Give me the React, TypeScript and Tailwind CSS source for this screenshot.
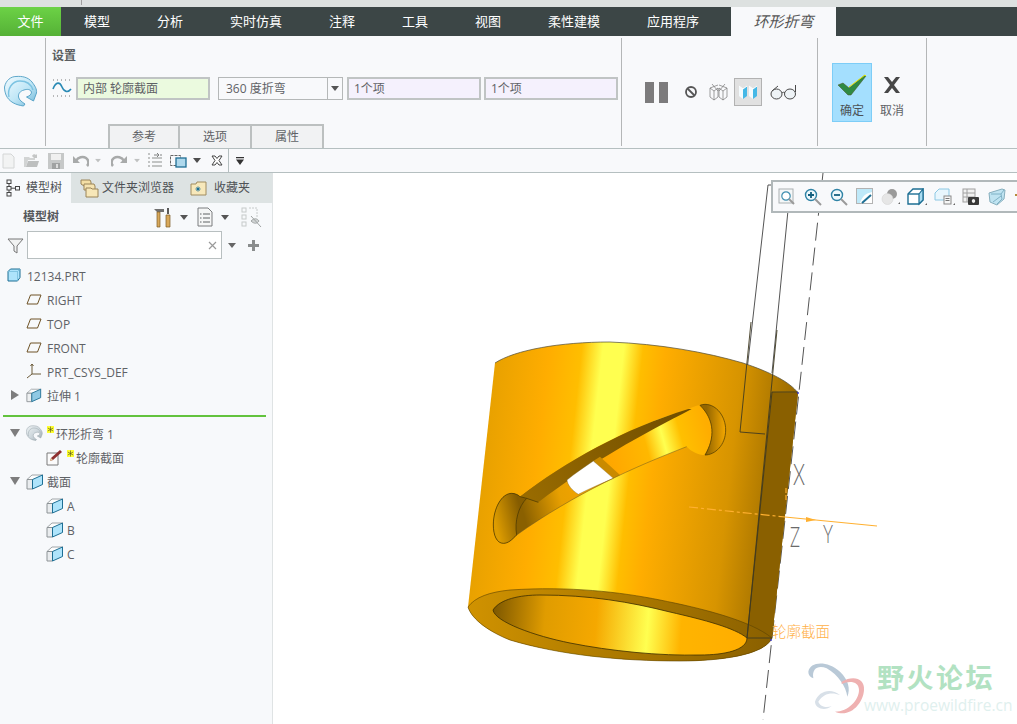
import React from "react";

const Tri = ({ c = "#6b6b6b", className = "" }: { c?: string; className?: string }) => (
  <svg width="8" height="5" viewBox="0 0 8 5" className={className}><path d="M0 0h8L4 5z" fill={c} /></svg>
);

const Revolve = ({ size = 34, grey = false }: { size?: number; grey?: boolean }) => (
  <svg width={size} height={size} viewBox="0 0 34 34">
    <defs>
      <linearGradient id={grey ? "rg" : "rb"} x1="0" y1="0" x2="1" y2="1">
        <stop offset="0" stopColor={grey ? "#eef2f4" : "#f2fbff"} />
        <stop offset="0.55" stopColor={grey ? "#ccd6db" : "#bfe6f6"} />
        <stop offset="1" stopColor={grey ? "#98a5ab" : "#6fb7d8"} />
      </linearGradient>
    </defs>
    <path d="M0.5 12C2 5 7 1.5 12 1.5C18 1 24 2 28 7C31 11 33 14 32.5 18L29.5 26L22.5 22C25 21 27.5 20 27.5 17C26 14 23 14 20 15C16 16 14 19 14.5 22C15 25 18 27 21 29L19.5 31C12 30 5 27 2 20C1 17 0.5 15 0.5 12Z" fill={`url(#${grey ? "rg" : "rb"})`} stroke={grey ? "#8d9aa1" : "#4f9ec4"} strokeWidth="0.9" />
    <path d="M5 22C3 14 8 6 16 6c6 0 11 3 13 9" fill="none" stroke={grey ? "#aab6bc" : "#7cc3e2"} strokeWidth="1.4" />
  </svg>
);

const Cube = ({ front = "#e9ecee", side = "#aee4fb", w = 18, h = 17 }: { front?: string; side?: string; w?: number; h?: number }) => (
  <svg width={w} height={h} viewBox="0 0 18 17">
    <path d="M1 6.5l5-4.5h11l-5 4.5z" fill="#fdfdfd" stroke="#9fa5a8" strokeWidth="1" />
    <path d="M1 6.5h5.5V16H1z" fill={front} stroke="#8d9396" strokeWidth="1" />
    <path d="M6.5 6.5L16.5 2v9.5L6.5 16z" fill={side} stroke="#1d6f94" strokeWidth="1" />
  </svg>
);

const Plane = () => (
  <svg width="16" height="11" viewBox="0 0 16 11"><path d="M4.5 1H15l-3.5 9H1z" fill="none" stroke="#6e5326" strokeWidth="1" /></svg>
);

const Star = () => (
  <svg width="7" height="8" viewBox="0 0 7 8" className="mb-[6px] shrink-0">
    <rect width="7" height="7" fill="#ffff30" />
    <path d="M3.5 0.5v6M0.8 2l5.4 3M0.8 5l5.4-3" stroke="#5c5c20" strokeWidth="0.7" />
  </svg>
);

const Text12 = ({ children }: { children: React.ReactNode }) => (
  <span className="text-[12px] leading-none text-[#5f6266] whitespace-nowrap">{children}</span>
);

function TreeRow({ indent, tri, icon, children }: { indent: string; tri?: "r" | "d"; icon: React.ReactNode; children: React.ReactNode }) {
  return (
    <div className={`flex h-6 items-center ${indent}`}>
      {tri === "r" && <svg width="8" height="10" viewBox="0 0 8 10" className="mr-[7px] ml-[11px]"><path d="M0 0l8 5-8 5z" fill="#7d7d7d" /></svg>}
      {tri === "d" && <svg width="10" height="8" viewBox="0 0 10 8" className="mr-[6px] ml-[10px]"><path d="M0 0h10L5 8z" fill="#7d7d7d" /></svg>}
      {icon}
      {children}
    </div>
  );
}

const Slot = ({ children, className = "" }: { children: React.ReactNode; className?: string }) => (
  <div className={`flex w-[26px] shrink-0 items-center justify-center ${className}`}>{children}</div>
);

function CanvasBar() {
  return (
    <div className="absolute left-[498px] top-[7px] flex h-[33px] w-[246px] items-center overflow-hidden border-2 border-r-0 border-[#b1b8ba] bg-[#f8f9fb] pl-[1px]">
      <Slot><svg width="18" height="18" viewBox="0 0 18 18"><rect x="1" y="1" width="14" height="14" fill="#f4f7f8" stroke="#aab0b2" /><circle cx="8" cy="8" r="4.2" fill="#fff" stroke="#3f8fb0" strokeWidth="1.2" /><path d="M11 11l5 5" stroke="#9a9a9a" strokeWidth="2" /></svg></Slot>
      <Slot><svg width="18" height="18" viewBox="0 0 18 18"><circle cx="7" cy="7" r="5.5" fill="#eef8fc" stroke="#2f83a6" strokeWidth="1.4" /><path d="M4 7h6M7 4v6" stroke="#14607f" strokeWidth="1.8" /><path d="M11 11l6 6" stroke="#9a9a9a" strokeWidth="2" /></svg></Slot>
      <Slot><svg width="18" height="18" viewBox="0 0 18 18"><circle cx="7" cy="7" r="5.5" fill="#eef8fc" stroke="#2f83a6" strokeWidth="1.4" /><path d="M4 7h6" stroke="#14607f" strokeWidth="1.8" /><path d="M11 11l6 6" stroke="#9a9a9a" strokeWidth="2" /></svg></Slot>
      <Slot><svg width="18" height="17" viewBox="0 0 18 17"><rect x="0.5" y="0.5" width="16" height="15" fill="#fff" stroke="#b3b3b3" /><path d="M1 1h15v3C12 5 7 6 4 15H1z" fill="#bfe9f9" /><path d="M6 15l9-8" stroke="#1d6f94" strokeWidth="2" /></svg></Slot>
      <Slot><svg width="20" height="18" viewBox="0 0 20 18"><circle cx="11" cy="6" r="5" fill="#9a9a9a" /><circle cx="6.5" cy="11" r="5.5" fill="#e6e6e6" stroke="#cfcfcf" strokeWidth="0.5" /><path d="M19 16h-2l2-2z" fill="#666" /></svg></Slot>
      <Slot><svg width="20" height="18" viewBox="0 0 20 18"><path d="M1 6l5-5h10v11l-4 4H1z" fill="#fff" stroke="#1d6f94" strokeWidth="1.4" /><path d="M12 6l4-5v11l-4 4z" fill="#a9dcf2" stroke="#1d6f94" strokeWidth="1.2" /><path d="M1 6h11" stroke="#1d6f94" strokeWidth="1.4" /><path d="M20 17h-2l2-2z" fill="#666" /></svg></Slot>
      <Slot className="ml-[2px]"><svg width="22" height="18" viewBox="0 0 22 18"><path d="M1 5l4-4h10v11H1z" fill="#e8f6fd" stroke="#8cc8e4" /><rect x="10" y="8" width="7" height="8" fill="#f6f6f6" stroke="#8a8a8a" /><path d="M11.5 10.5h4M11.5 12.5h4" stroke="#777" /><path d="M21 17h-2l2-2z" fill="#666" /></svg></Slot>
      <Slot><svg width="18" height="18" viewBox="0 0 18 18"><rect x="1" y="1" width="12" height="13" fill="#f1f1f1" stroke="#a0a0a0" /><path d="M1 5h12M1 9h12M5 1v13" stroke="#a0a0a0" /><rect x="6" y="9" width="11" height="8" rx="1" fill="#3a3a3a" /><circle cx="11.5" cy="13" r="2.4" fill="#eee" stroke="#222" /></svg></Slot>
      <Slot><svg width="18" height="18" viewBox="0 0 18 18"><path d="M1 5l13-4 3 1-1 9-7 6-7-3z" fill="#bfe3f1" stroke="#86aebd" /><path d="M3 6h10l1 5-5 5M13 6l3-4M5 14l8-6" stroke="#7fb2c6" fill="none" /></svg></Slot>
      <svg width="4" height="6" viewBox="0 0 4 6" className="ml-[5px] shrink-0"><path d="M0 0h2v2H0zM2 3h2v2H2z" fill="#b58a3a" /></svg>
    </div>
  );
}

function Model() {
  const bottom = "C472 620 490 632 510 640C560 655 620 661 680 661C720 661 765 655 772 638";
  return (
    <svg viewBox="273 173 744 551" className="block h-full w-full">
      <defs>
        <linearGradient id="body" gradientUnits="userSpaceOnUse" x1="480" y1="450" x2="800" y2="485">
          <stop offset="0" stopColor="#e6a000" />
          <stop offset="0.18" stopColor="#ffad00" />
          <stop offset="0.28" stopColor="#ffbe00" />
          <stop offset="0.345" stopColor="#ffff50" />
          <stop offset="0.41" stopColor="#ffff50" />
          <stop offset="0.47" stopColor="#ffbe00" />
          <stop offset="0.54" stopColor="#ffad00" />
          <stop offset="0.78" stopColor="#d79400" />
          <stop offset="1" stopColor="#8a6000" />
        </linearGradient>
        <linearGradient id="inner" gradientUnits="userSpaceOnUse" x1="493" y1="620" x2="750" y2="640">
          <stop offset="0" stopColor="#7e5800" />
          <stop offset="0.2" stopColor="#e09c00" />
          <stop offset="0.4" stopColor="#f5a800" />
          <stop offset="0.6" stopColor="#ffff50" />
          <stop offset="0.73" stopColor="#ffb400" />
          <stop offset="1" stopColor="#ffad00" />
        </linearGradient>
        <linearGradient id="ring" gradientUnits="userSpaceOnUse" x1="468" y1="610" x2="772" y2="640">
          <stop offset="0" stopColor="#d09200" />
          <stop offset="0.45" stopColor="#b07c00" />
          <stop offset="1" stopColor="#8a6000" />
        </linearGradient>
        <linearGradient id="slot" gradientUnits="userSpaceOnUse" x1="100" y1="300" x2="680" y2="140">
          <stop offset="0" stopColor="#8a6000" />
          <stop offset="0.2" stopColor="#e8a000" />
          <stop offset="0.5" stopColor="#ffa800" />
          <stop offset="0.68" stopColor="#ffb800" />
          <stop offset="0.77" stopColor="#ffff50" />
          <stop offset="0.86" stopColor="#ffc000" />
          <stop offset="1" stopColor="#ffad00" />
        </linearGradient>
        <linearGradient id="capL" gradientUnits="userSpaceOnUse" x1="30" y1="380" x2="110" y2="360">
          <stop offset="0" stopColor="#dd9c00" />
          <stop offset="1" stopColor="#855c00" />
        </linearGradient>
        <linearGradient id="capR" gradientUnits="userSpaceOnUse" x1="665" y1="100" x2="722" y2="100">
          <stop offset="0" stopColor="#946600" />
          <stop offset="1" stopColor="#f5a800" />
        </linearGradient>
        <linearGradient id="wall" gradientUnits="userSpaceOnUse" x1="105" y1="305" x2="610" y2="42">
          <stop offset="0" stopColor="#9a6c00" />
          <stop offset="1" stopColor="#6f4d00" />
        </linearGradient>
      </defs>

      <g fill="none" stroke="#555" strokeWidth="1">
        <path d="M823 173L763 720" strokeDasharray="18 7" />
        <path d="M775 185H768L740 432" />
        <path d="M790 190L772 373" />
      </g>

      <path d={`M495 363C515 350 560 342 610 342C660 344 705 352 743 363C770 372 790 382 798 393L772 638C765 655 720 661 680 661C620 661 560 655 510 640C490 632 472 620 468 607Z`} fill="url(#body)" />
      <path d="M772 392L798 393L772 638L747 638Z" fill="#8a6000" />
      <path d="M495 363C515 350 560 342 610 342C660 344 705 352 743 363C770 372 790 382 798 393" fill="none" stroke="#4d4a3a" strokeWidth="0.7" />
      <path d={`M468 607${bottom}C750 620 700 608 660 600C620 592 570 586 510 590C490 592 475 597 468 607Z`} fill="url(#ring)" stroke="#5a4200" strokeWidth="0.6" />
      <path d="M493 610C500 599 520 595 540 595C590 595 630 602 670 612C705 620 735 628 747 638C747 650 725 655 700 655C660 656 610 651 570 643C535 636 495 622 493 610Z" fill="url(#inner)" stroke="#3e2f00" strokeWidth="0.8" />

      <g transform="translate(485 395) scale(0.33333)" strokeWidth="2.2">
        <path d="M105 305C240 200 420 100 610 42C625 35 645 28 660 28C695 28 722 65 722 105C722 150 690 180 660 180C640 180 620 170 605 155C450 215 270 295 95 420C80 435 70 445 55 445C35 445 25 420 25 390C25 340 50 295 80 295C90 295 100 300 105 305Z" fill="url(#slot)" />
        <path d="M105 305C240 200 420 100 610 42L620 42C470 120 320 200 160 322Z" fill="url(#wall)" />
        <path d="M80 295C50 295 25 340 25 390C25 420 35 445 55 445C70 445 80 435 95 420C88 380 100 335 125 310L105 305C100 300 90 295 80 295Z" fill="url(#capL)" stroke="#4a3800" />
        <path d="M645 31C650 29 655 28 660 28C695 28 722 65 722 105C722 150 690 180 660 180C690 130 690 75 645 31Z" fill="url(#capR)" stroke="#4a3800" />
        <path d="M325 198L345 185L405 240L385 250Z" fill="#c98a00" />
        <path d="M325 198L385 250C350 265 315 280 280 298C260 285 248 270 246 255C270 235 300 215 325 198Z" fill="#fff" stroke="#7f6a30" strokeWidth="1.2" />
        <path d="M125 310L160 322" fill="none" stroke="#4a3800" />
        <path d="M605 155C450 215 270 295 95 420" fill="none" stroke="#6a5620" strokeWidth="1.5" />
      </g>

      <g fill="none" stroke="#3f3a20" strokeWidth="0.9">
        <path d="M751 322L740 432L765 434" />
        <path d="M772 392L747 638L772 638" />
        <path d="M772 392H798" />
        <path d="M777 330L747 638" />
      </g>
      <circle cx="798" cy="393" r="0.9" fill="#3333cc" />
      <circle cx="771" cy="640" r="0.9" fill="#3333cc" />

      <g fill="none" stroke="#ffb030" strokeWidth="1.2">
        <path d="M689 507L785 517" strokeDasharray="9 3 3 3" />
        <path d="M785 517L877 526" />
        <path d="M786 488V500" strokeDasharray="5 2" />
      </g>
      <path d="M806 517l10 3-10 2z" fill="#ffb030" />

      <text x="793" y="485" fontSize="30" fontWeight="300" fill="#6a6a6a" style={{ fontFamily: "Lato, sans-serif" }} textLength="12" lengthAdjust="spacingAndGlyphs">X</text>
      <text x="790" y="547" fontSize="27" fontWeight="300" fill="#6a6a6a" style={{ fontFamily: "Lato, sans-serif" }} textLength="10" lengthAdjust="spacingAndGlyphs">Z</text>
      <text x="823" y="543" fontSize="26" fontWeight="300" fill="#6a6a6a" style={{ fontFamily: "Lato, sans-serif" }} textLength="10" lengthAdjust="spacingAndGlyphs">Y</text>
      <text x="772" y="637" fontSize="14.5" fill="#ffb046" style={{ fontFamily: "'Noto Sans CJK SC', sans-serif", fontWeight: 300 }}>轮廓截面</text>

      <g transform="translate(760 600) scale(0.33333)">
        <path d="M145 215C150 185 200 180 240 215C265 240 272 265 262 290C258 260 235 225 200 205C175 195 155 205 160 235C150 230 145 225 145 215Z" fill="#b9c9d7" />
        <path d="M245 245C280 225 315 235 312 270C310 310 270 355 225 335C265 335 297 300 297 270C297 245 270 240 245 252Z" fill="#efb1b1" />
        <path d="M165 305C175 275 210 262 240 285C215 275 190 280 175 305C180 320 200 325 215 318C195 335 165 325 165 305Z" fill="#d8e0e8" />
      </g>
    </svg>
  );
}

export default function App() {
  const tabs = ["模型", "分析", "实时仿真", "注释", "工具", "视图", "柔性建模", "应用程序"];
  const font = "font-['Open_Sans','Noto_Sans_CJK_SC',sans-serif]";
  return (
    <div className={`relative flex h-[724px] w-[1017px] flex-col overflow-hidden bg-white ${font}`}>
      {/* title strip */}
      <div className="h-[7px] bg-[#dde1e0]"><div className="ml-[81px] h-[5px] w-px bg-[#a0a0a0]" /></div>

      {/* tabs */}
      <div className="flex h-[29px] items-center bg-[#3c4646] text-[13px] text-white">
        <div className="flex h-full w-[61px] items-center justify-center bg-gradient-to-b from-[#6cd246] to-[#55b136]">文件</div>
        <div className="ml-[23px] flex gap-[47px]">
          {tabs.map((t) => <span key={t}>{t}</span>)}
        </div>
        <div className="ml-[32px] flex h-full w-[105px] items-center justify-center bg-[#f8f9fb] text-[15px] italic text-[#555]">环形折弯</div>
      </div>

      {/* ribbon */}
      <div className="flex h-[112px] bg-[#f8f9fb]">
        <div className="flex w-[45px] items-center pl-[4px]"><Revolve /></div>
        <div className="my-[2px] w-px bg-[#b4b6b7]" />
        <div className="flex w-[575px] flex-col pl-[6px] pt-[12px]">
          <div className="h-4 text-[12px] font-bold leading-4 text-[#5a5d60]">设置</div>
          <div className="mt-[13px] flex h-[23px] items-center text-[12px] text-[#5f6266]">
            <svg width="20" height="19" viewBox="0 0 20 19" className="mr-[4px]">
              <path d="M1 1h18M1 17h18" stroke="#777" strokeWidth="1" strokeDasharray="1 3" />
              <path d="M1 10C4 2 8 3 10 8s6 6 9 2" fill="none" stroke="#2a8ab5" strokeWidth="1.6" />
            </svg>
            <div className="flex h-[23px] w-[134px] items-center border-2 border-[#c0c4c4] bg-[#ebfadf] pl-[5px]">内部 轮廓截面</div>
            <div className="ml-[8px] flex h-[23px] w-[125px] items-center border border-[#b5b8b8] bg-[#f8f9fb] pl-[7px]">
              <span className="flex-1">360 度折弯</span>
              <span className="flex h-full w-[15px] items-center justify-center border-l border-[#b5b8b8]"><Tri c="#555" /></span>
            </div>
            <div className="ml-[4px] flex h-[23px] w-[134px] items-center border-2 border-[#c0c4c4] bg-[#f5f1fd] pl-[5px]">1个项</div>
            <div className="ml-[3px] flex h-[23px] w-[134px] items-center border-2 border-[#c0c4c4] bg-[#f5f1fd] pl-[5px]">1个项</div>
          </div>
          <div className="ml-[56px] mt-[24px] flex h-[24px] text-[12px] text-[#5f6266]">
            <div className="flex w-[72px] items-center justify-center border-2 border-b-0 border-[#bcc0c0] bg-[#f1f2f3]">参考</div>
            <div className="flex w-[72px] items-center justify-center border-2 border-b-0 border-l-0 border-[#bcc0c0] bg-[#f1f2f3]">选项</div>
            <div className="flex w-[72px] items-center justify-center border-2 border-b-0 border-l-0 border-[#bcc0c0] bg-[#f1f2f3]">属性</div>
          </div>
        </div>
        <div className="my-[2px] w-px bg-[#b4b6b7]" />
        <div className="flex w-[195px] items-center pl-[23px]">
          <div className="h-[21px] w-[9px] bg-[#7c7b7c]" />
          <div className="ml-[5px] h-[21px] w-[9px] bg-[#7c7b7c]" />
          <svg width="14" height="14" viewBox="0 0 14 14" className="ml-[16px]"><circle cx="7" cy="7" r="5" fill="none" stroke="#555" strokeWidth="1.8" /><path d="M3.5 3.5l7 7" stroke="#555" strokeWidth="1.8" /></svg>
          <svg width="20" height="18" viewBox="0 0 20 18" className="ml-[11px]" fill="none" stroke="#777" strokeWidth="0.7"><path d="M1 5l4 3 4-3v9l-4 3-4-3zM10 5l4 3 4-3v9l-4 3-4-3zM5 8v9M14 8v9M3 1l6 7M16 1l-6 7M1 5l8-3M10 2l8 3" /></svg>
          <div className="ml-[5px] flex h-[28px] w-[28px] items-center justify-center border border-[#b2b2b2] bg-[#e1e1e1]">
            <svg width="20" height="16" viewBox="0 0 20 16"><path d="M1 2l4 3v10L1 12z" fill="#f4fbfe" /><path d="M5 5l4-3v10l-4 3z" fill="#45b8e6" /><path d="M11 2l4 3v10l-4-3z" fill="#f4fbfe" /><path d="M15 5l4-3v10l-4 3z" fill="#45b8e6" /><path d="M1 2l4 3 4-3M11 2l4 3 4-3" stroke="#fff" fill="none" /></svg>
          </div>
          <svg width="27" height="16" viewBox="0 0 27 16" className="ml-[8px]" fill="none" stroke="#4a4a4a" strokeWidth="1"><ellipse cx="6.5" cy="10" rx="5.5" ry="5" fill="#eef3f6" /><ellipse cx="20" cy="10" rx="5.5" ry="5" fill="#eef3f6" /><path d="M12 9c1-1 2-1 3 0M2 7L8 2M25.5 8V1" /></svg>
        </div>
        <div className="my-[2px] w-px bg-[#b4b6b7]" />
        <div className="flex w-[108px] items-center pl-[14px]">
          <div className="flex h-[59px] w-[40px] flex-col items-center border border-[#7dcdf7] bg-[#a4dffe] pt-[10px]">
            <svg width="30" height="22" viewBox="0 0 30 22"><path d="M1 11l5-2 6 5L28 1l1 1-15 19h-3z" fill="#2f8a43" stroke="#4c4c20" strokeWidth="0.5" /><path d="M12 13L28 1l1 1" fill="none" stroke="#e8e800" strokeWidth="1" /></svg>
            <span className="mt-[9px] text-[12px] leading-none text-[#4c5257]">确定</span>
          </div>
          <div className="ml-[8px] flex h-[59px] w-[24px] flex-col items-center pt-[13px]">
            <svg width="20" height="18" viewBox="0 0 20 18"><path d="M2 1h4l4 5 4-5h4l-6 8 6 8h-4l-4-5-4 5H2l6-8z" fill="#474747" /></svg>
            <span className="mt-[11px] text-[12px] leading-none text-[#5f6266] whitespace-nowrap">取消</span>
          </div>
        </div>
        <div className="my-[2px] w-px bg-[#b4b6b7]" />
      </div>

      {/* quick access */}
      <div className="flex h-[25px] items-center border-y border-[#b5bfc0] bg-[#f8f9fb] pl-[2px]">
        <svg width="13" height="16" viewBox="0 0 13 16"><path d="M1 1h8l3 3v11H1z" fill="#f2f3f3" stroke="#d4d6d6" /></svg>
        <svg width="17" height="15" viewBox="0 0 17 15" className="ml-[8px]"><path d="M1 14V4h5l1 1h5v2H5l-2 7z" fill="#d2d4d4" /><path d="M3 14l2-6h11l-2 6z" fill="#bdbfbf" /><path d="M9 3c1-2 3-2 4-1l1-1v4h-3" fill="#c4c6c6" /></svg>
        <svg width="16" height="16" viewBox="0 0 16 16" className="ml-[8px]"><path d="M0 0h16v16H0z" fill="#c6c8c8" /><path d="M3 1h10v6H3z" fill="#f0f0f0" /><path d="M4 10h8v6H4z" fill="#a0a2a2" /><path d="M8 11h2v4H8z" fill="#dcdcdc" /></svg>
        <svg width="17" height="12" viewBox="0 0 17 12" className="ml-[8px]"><path d="M4 6C6 2 11 1 14 3s3 6 1 8" fill="none" stroke="#a8aaaa" strokeWidth="2.6" /><path d="M1 1v7h7z" fill="#a8aaaa" /></svg>
        <Tri c="#c0c2c2" className="ml-[5px] scale-75" />
        <svg width="17" height="12" viewBox="0 0 17 12" className="ml-[9px]"><path d="M13 6C11 2 6 1 3 3s-3 6-1 8" fill="none" stroke="#a8aaaa" strokeWidth="2.6" /><path d="M16 1v7H9z" fill="#a8aaaa" /></svg>
        <Tri c="#c0c2c2" className="ml-[5px] scale-75" />
        <svg width="16" height="15" viewBox="0 0 16 15" className="ml-[6px]"><path d="M1 1h2M1 5h2M1 9h2M1 13h2M5 5h10M5 9h10M5 13h10" stroke="#b0b2b2" strokeWidth="1.6" /><path d="M7 2h4M10 0l2 2-2 2M15 2h-2" stroke="#808282" fill="none" /></svg>
        <svg width="17" height="16" viewBox="0 0 17 16" className="ml-[7px]"><rect x="0.5" y="2.5" width="10" height="10" fill="none" stroke="#666" strokeDasharray="3 1" /><rect x="6" y="5" width="10" height="9" fill="#aed8ec" stroke="#1f6f95" strokeWidth="1.3" /></svg>
        <Tri c="#4d4d4d" className="ml-[6px]" />
        <svg width="12" height="11" viewBox="0 0 12 11" className="ml-[10px]"><path d="M1 1h3l2 2.5L8 1h3L8 5.5 11 10H8L6 7.5 4 10H1l3-4.5z" fill="#fff" stroke="#444" strokeWidth="1" /></svg>
        <div className="ml-[5px] h-full w-px bg-[#b5bfc0]" />
        <svg width="8" height="8" viewBox="0 0 8 8" className="ml-[7px]"><path d="M0 0h8v1.2H0zM0 2.5h8L4 8z" fill="#333" /></svg>
      </div>

      {/* main */}
      <div className="flex min-h-0 flex-1">
        <aside className="flex w-[273px] shrink-0 flex-col border-r border-[#dfe3e4] bg-[#f7f9fb]">
          <div className="flex h-[30px] bg-[#dde3e3] text-[12px] text-[#4f5256]">
            <div className="flex w-[71px] items-center bg-[#f7f9fb] pl-[6px]">
              <svg width="14" height="18" viewBox="0 0 14 18" fill="none" stroke="#444" strokeWidth="1"><rect x="1" y="1" width="4" height="3.5" /><rect x="1" y="7.5" width="4" height="3.5" /><rect x="1" y="13.5" width="4" height="3.5" /><rect x="9.5" y="7.5" width="4" height="3.5" /><path d="M3 4.5v3M3 11v2.5M5 9.2h4.5" /></svg>
              <span className="ml-[6px]">模型树</span>
            </div>
            <div className="flex items-center pl-[9px]">
              <svg width="19" height="19" viewBox="0 0 19 19"><path d="M1 1h9l1 2v4H4L1 5z" fill="#f4dfa5" stroke="#9a8458" /><path d="M4 5h10l1 2v4H4z" fill="#f6e4b1" stroke="#9a8458" /><path d="M6 9h5l1 1h6v8H6z" fill="#f7e7b8" stroke="#9a8458" /></svg>
              <span className="ml-[3px]">文件夹浏览器</span>
            </div>
            <div className="ml-[16px] flex items-center">
              <svg width="17" height="15" viewBox="0 0 17 15"><path d="M1 3h5l1-2h9v13H1z" fill="#f7e8bb" stroke="#a08c60" /><path d="M8 5.5v5M5.5 8h5M6.5 6.5l3 3M9.5 6.5l-3 3" stroke="#1a6f95" /></svg>
              <span className="ml-[7px]">收藏夹</span>
            </div>
          </div>

          <div className="flex h-[28px] items-center pl-[23px]">
            <span className="text-[12px] font-bold text-[#55585c]">模型树</span>
            <svg width="20" height="21" viewBox="0 0 20 21" className="ml-[94px]"><path d="M1 2h10v3H4z" fill="#707070" /><path d="M4 5h3v15H4z" fill="#d8a85a" stroke="#7c5d28" strokeWidth="0.7" /><path d="M14 1h2v6h-2z" fill="#5a5a5a" /><path d="M13 8h4v12h-4z" fill="#d8a85a" stroke="#7c5d28" strokeWidth="0.7" /></svg>
            <Tri c="#555" className="ml-[7px]" />
            <svg width="16" height="20" viewBox="0 0 16 20" className="ml-[9px]"><path d="M1 1h10l4 4v14H1z" fill="#f5f6f6" stroke="#7a7d7f" /><path d="M6 7h7M6 11h7M6 15h7" stroke="#5f6265" /><path d="M3 7h1.5M3 11h1.5M3 15h1.5" stroke="#5f6265" /></svg>
            <Tri c="#555" className="ml-[8px]" />
            <svg width="21" height="21" viewBox="0 0 21 21" className="ml-[12px]" fill="none" stroke="#c6caca"><rect x="1" y="1" width="4" height="4" /><rect x="1" y="8" width="4" height="4" /><rect x="1" y="15" width="4" height="4" /><path d="M8 1h8v9" strokeDasharray="2 1" /><path d="M10 14c3-3 6-3 8 0-2 3-5 3-8 0z" fill="#d0d4d4" stroke="#a4a8a8" /><path d="M10 9l10 11" stroke="#a0a4a4" /></svg>
          </div>

          <div className="flex h-[28px] items-center pl-[7px]">
            <svg width="17" height="17" viewBox="0 0 17 17"><path d="M1 2h15l-6 7v7l-3-2V9z" fill="#f1f2f2" stroke="#777" /></svg>
            <div className="ml-[3px] flex h-[28px] w-[195px] items-center justify-end border border-[#b8bfc0] bg-white pr-[4px]">
              <svg width="9" height="9" viewBox="0 0 9 9"><path d="M1 1l7 7M8 1L1 8" stroke="#9a9a9a" strokeWidth="1.2" /></svg>
            </div>
            <Tri c="#666" className="ml-[6px]" />
            <svg width="11" height="11" viewBox="0 0 11 11" className="ml-[12px]"><path d="M4 0h3v4h4v3H7v4H4V7H0V4h4z" fill="#8a8d8d" /></svg>
          </div>

          <div className="mt-[4px]">
            <TreeRow indent="pl-[7px]" icon={<svg width="14" height="14" viewBox="0 0 14 14"><path d="M1 3.5L3.5 1H13v8.5L10.5 13H1z" fill="#aee4fb" stroke="#1d6f94" /><path d="M1 3.5h9.5V13M10.5 3.5L13 1" fill="none" stroke="#6fb9d8" strokeWidth="0.7" /></svg>}><span className="ml-[6px]"><Text12>12134.PRT</Text12></span></TreeRow>
            {["RIGHT", "TOP", "FRONT"].map((n) => (
              <TreeRow key={n} indent="pl-[26px]" icon={<Plane />}><span className="ml-[5px]"><Text12>{n}</Text12></span></TreeRow>
            ))}
            <TreeRow indent="pl-[26px]" icon={<svg width="16" height="16" viewBox="0 0 16 16" fill="none" stroke="#6b5a38"><path d="M6 1v10L1 15M6 11h9" /><path d="M4.5 3L6 1l1.5 2" /></svg>}><span className="ml-[5px]"><Text12>PRT_CSYS_DEF</Text12></span></TreeRow>
            <TreeRow indent="" tri="r" icon={<Cube front="#eef0f1" side="#8fc9e4" w={16} h={16} />}><span className="ml-[5px]"><Text12>拉伸 1</Text12></span></TreeRow>
          </div>

          <div className="ml-[3px] mt-[8px] h-[2px] w-[263px] bg-[#62c33d]" />

          <div className="mt-[4px]">
            <TreeRow indent="" tri="d" icon={<Revolve size={17} grey />}><span className="ml-[4px] flex items-center"><Star /><span className="ml-[2px]"><Text12>环形折弯 1</Text12></span></span></TreeRow>
            <TreeRow indent="pl-[46px]" icon={<svg width="17" height="17" viewBox="0 0 17 17"><path d="M1 4h11v12H1z" fill="#fbfbfb" stroke="#7a7a7a" /><path d="M4 12l1-3 9-8 2 2-9 8z" fill="#8e2f2f" /><path d="M4 12l1-3 2 2z" fill="#e8cfa0" /></svg>}><span className="ml-[4px] flex items-center"><Star /><span className="ml-[2px]"><Text12>轮廓截面</Text12></span></span></TreeRow>
            <TreeRow indent="" tri="d" icon={<Cube />}><span className="ml-[3px]"><Text12>截面</Text12></span></TreeRow>
            {["A", "B", "C"].map((n) => (
              <TreeRow key={n} indent="pl-[46px]" icon={<Cube />}><span className="ml-[3px]"><Text12>{n}</Text12></span></TreeRow>
            ))}
          </div>
        </aside>

        <main className="relative min-w-0 flex-1 bg-white">
          <Model />
          <CanvasBar />
          <div className="absolute left-[604px] top-[490px] text-[27px] font-bold leading-none tracking-[2.5px] text-[#b2e2c2] font-['Noto_Sans_CJK_SC',sans-serif]">野火论坛</div>
          <div className="absolute left-[591px] top-[525px] whitespace-nowrap text-[15.5px] leading-none text-[#dff0ee]">www.proewildfire.cn</div>
        </main>
      </div>
    </div>
  );
}
